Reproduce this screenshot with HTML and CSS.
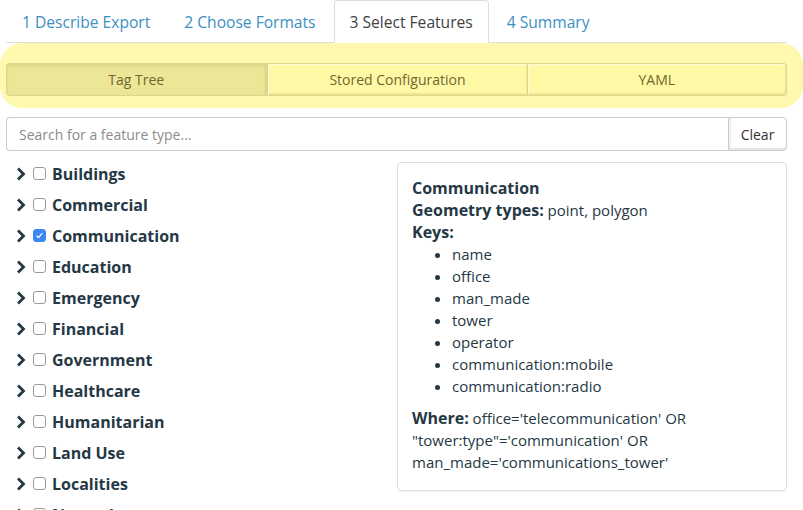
FILE: index.html
```html
<!DOCTYPE html>
<html>
<head>
<meta charset="utf-8">
<link rel="stylesheet" href="styles.css">
</head>
<body>
<div class="page">
  <ul class="tabs">
    <li class="tab"><a>1 Describe Export</a></li>
    <li class="tab"><a>2 Choose Formats</a></li>
    <li class="tab active"><a>3 Select Features</a></li>
    <li class="tab"><a>4 Summary</a></li>
  </ul>
  <div class="highlight">
    <div class="btn-group">
      <button class="seg active">Tag Tree</button>
      <button class="seg">Stored Configuration</button>
      <button class="seg">YAML</button>
    </div>
  </div>
  <div class="search">
    <input class="search-input" type="text" placeholder="Search for a feature type...">
    <button class="clear">Clear</button>
  </div>
  <div class="content">
    <ul class="tree">
      <li class="node"><svg class="chev" viewBox="0 0 10 14"><path d="M2 1.5 L7.5 7 L2 12.5"/></svg><span class="cb"></span><span>Buildings</span></li>
      <li class="node"><svg class="chev" viewBox="0 0 10 14"><path d="M2 1.5 L7.5 7 L2 12.5"/></svg><span class="cb"></span><span>Commercial</span></li>
      <li class="node"><svg class="chev" viewBox="0 0 10 14"><path d="M2 1.5 L7.5 7 L2 12.5"/></svg><span class="cb checked"><svg viewBox="0 0 13 13"><path d="M3.2 6.8 L5.4 9 L9.8 3.8"/></svg></span><span>Communication</span></li>
      <li class="node"><svg class="chev" viewBox="0 0 10 14"><path d="M2 1.5 L7.5 7 L2 12.5"/></svg><span class="cb"></span><span>Education</span></li>
      <li class="node"><svg class="chev" viewBox="0 0 10 14"><path d="M2 1.5 L7.5 7 L2 12.5"/></svg><span class="cb"></span><span>Emergency</span></li>
      <li class="node"><svg class="chev" viewBox="0 0 10 14"><path d="M2 1.5 L7.5 7 L2 12.5"/></svg><span class="cb"></span><span>Financial</span></li>
      <li class="node"><svg class="chev" viewBox="0 0 10 14"><path d="M2 1.5 L7.5 7 L2 12.5"/></svg><span class="cb"></span><span>Government</span></li>
      <li class="node"><svg class="chev" viewBox="0 0 10 14"><path d="M2 1.5 L7.5 7 L2 12.5"/></svg><span class="cb"></span><span>Healthcare</span></li>
      <li class="node"><svg class="chev" viewBox="0 0 10 14"><path d="M2 1.5 L7.5 7 L2 12.5"/></svg><span class="cb"></span><span>Humanitarian</span></li>
      <li class="node"><svg class="chev" viewBox="0 0 10 14"><path d="M2 1.5 L7.5 7 L2 12.5"/></svg><span class="cb"></span><span>Land Use</span></li>
      <li class="node"><svg class="chev" viewBox="0 0 10 14"><path d="M2 1.5 L7.5 7 L2 12.5"/></svg><span class="cb"></span><span>Localities</span></li>
      <li class="node"><svg class="chev" viewBox="0 0 10 14"><path d="M2 1.5 L7.5 7 L2 12.5"/></svg><span class="cb"></span><span>Natural</span></li>
    </ul>
    <div class="info">
      <div class="info-title">Communication</div>
      <div><b>Geometry types:</b> point, polygon</div>
      <div><b>Keys:</b></div>
      <ul class="keys">
        <li>name</li>
        <li>office</li>
        <li>man_made</li>
        <li>tower</li>
        <li>operator</li>
        <li>communication:mobile</li>
        <li>communication:radio</li>
      </ul>
      <div><b>Where:</b> office='telecommunication' OR "tower:type"='communication' OR man_made='communications_tower'</div>
    </div>
  </div>
</div>
</body>
</html>
```

FILE: styles.css
```css
* { box-sizing: border-box; }
html, body { margin: 0; padding: 0; background: #fff; }
body {
  font-family: "Open Sans", "Noto Sans", sans-serif;
  color: #253845;
  width: 803px;
  height: 510px;
  overflow: hidden;
}
.page { padding: 0 16px 0 6px; }

.tabs {
  list-style: none;
  margin: 0;
  padding: 0;
  display: flex;
  border-bottom: 1px solid #ddd;
  height: 43px;
}
.tab { margin-right: 2px; }
.tab a {
  display: block;
  height: 43px;
  padding: 0 15px;
  line-height: 42px;
  font-size: 15.6px;
  color: #3b8fc2;
  border: 1px solid transparent;
  border-radius: 4px 4px 0 0;
}
.tab.active a {
  color: #3f3f3f;
  background: #fff;
  border-color: #ddd #ddd #fff;
}

.highlight {
  margin: 0 -16px 0 -6px;
  padding: 20px 16px 12px 6px;
  background: #fff9b0;
  border-radius: 22px;
}
.btn-group {
  display: flex;
  height: 33px;
}
.seg {
  flex: 1;
  font-family: inherit;
  font-size: 14px;
  color: #6e6830;
  background: #fff8a5;
  border: 1px solid #ddd58c;
  border-left-width: 0;
  box-shadow: inset 1px 1px 0 #fffbd0, inset -1px -2px 0 #ece594;
  margin: 0;
  padding: 0;
}
.seg:first-child { border-left-width: 1px; border-radius: 4px 0 0 4px; }
.seg:last-child { border-radius: 0 4px 4px 0; }
.seg.active {
  background: #ece697;
  box-shadow: inset 0 2px 3px rgba(150, 140, 60, 0.18);
  border-right-width: 3px;
  border-right-color: #ddd68f;
}

.search {
  display: flex;
  margin-top: 9px;
  height: 34px;
}
.search-input {
  flex: 1;
  font-family: inherit;
  font-size: 14px;
  color: #555;
  padding: 0 12px;
  border: 1px solid #ccc;
  border-right: 0;
  border-radius: 4px 0 0 4px;
  outline: none;
}
.search-input::placeholder { color: #8c8c8c; }
.clear {
  width: 59px;
  font-family: inherit;
  font-size: 14px;
  color: #333;
  background: #fff;
  border: 1px solid #ccc;
  border-radius: 0 4px 4px 0;
  box-shadow: inset 0 -2px 0 #e6e6e6, inset 2px 0 0 #eee;
  padding: 0;
}

.content {
  display: grid;
  grid-template-columns: 1fr 390px;
  column-gap: 6px;
  align-items: start;
}
.tree {
  list-style: none;
  margin: 7px 0 0;
  padding: 0 0 0 10px;
}
.node {
  display: flex;
  align-items: center;
  height: 31px;
  font-weight: 700;
  font-size: 16px;
}
.chev {
  width: 10px;
  height: 14px;
  fill: none;
  stroke: #253845;
  stroke-width: 2.8;
}
.cb {
  flex: none;
  width: 13px;
  height: 13px;
  margin: 0 6px 0 7px;
  border: 1px solid #9a9a9a;
  border-radius: 3px;
  background: #fff;
  display: flex;
}
.cb.checked {
  background: #3b88f5;
  border-color: #3b88f5;
}
.cb svg {
  width: 11px;
  height: 11px;
  fill: none;
  stroke: #fff;
  stroke-width: 1.4;
}
.info {
  margin-top: 11px;
  border: 1px solid #ddd;
  border-radius: 4px;
  padding: 14px 14px 17px;
  font-size: 15px;
  line-height: 22px;
  box-shadow: 0 1px 1px rgba(0,0,0,0.04);
}
.info-title { font-weight: 700; font-size: 16px; }
.info b { font-weight: 700; font-size: 16px; line-height: 22px; }
.keys {
  margin: 0 0 10px;
  padding-left: 40px;
}
```
